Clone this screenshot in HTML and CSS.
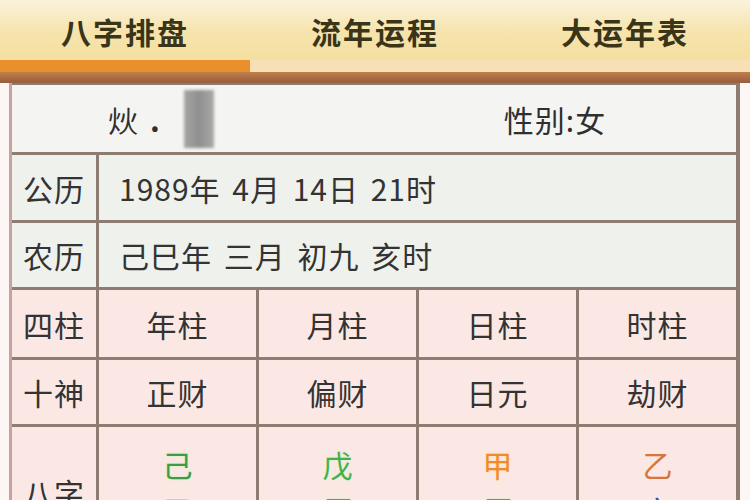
FILE: index.html
```html
<!DOCTYPE html>
<html lang="zh-CN">
<head>
<meta charset="utf-8">
<title>八字排盘</title>
<link rel="stylesheet" href="styles.css">
</head>
<body>
<div class="page">
  <nav class="tabs">
    <div class="tab active">八字排盘</div>
    <div class="tab">流年运程</div>
    <div class="tab">大运年表</div>
  </nav>
  <div class="tabline"></div>
  <div class="chart">
    <div class="row-info">
      <div class="info-name">炏<span class="dot">.</span><span class="mask"></span></div>
      <div class="info-gender">性别:女</div>
    </div>

    <div class="label light">公历</div>
    <div class="value light">1989年 4月 14日 21时</div>

    <div class="label light">农历</div>
    <div class="value light">己巳年 三月 初九 亥时</div>

    <div class="label pink">四柱</div>
    <div class="cell pink">年柱</div>
    <div class="cell pink">月柱</div>
    <div class="cell pink">日柱</div>
    <div class="cell pink">时柱</div>

    <div class="label pink">十神</div>
    <div class="cell pink">正财</div>
    <div class="cell pink">偏财</div>
    <div class="cell pink">日元</div>
    <div class="cell pink">劫财</div>

    <div class="label pink">八字</div>
    <div class="pillar pink"><span class="c-earth">己</span><span class="c-fire">巳</span></div>
    <div class="pillar pink"><span class="c-earth2">戊</span><span class="c-earth2">辰</span></div>
    <div class="pillar pink"><span class="c-wood">甲</span><span class="c-earth2">辰</span></div>
    <div class="pillar pink"><span class="c-wood2">乙</span><span class="c-water">亥</span></div>
  </div>
</div>
</body>
</html>
```
FILE: styles.css
```css
* { box-sizing: border-box; }
html, body {
  margin: 0;
  padding: 0;
  background: #fcf6f4;
  font-family: "Noto Sans CJK SC", "Noto Sans", sans-serif;
  color: #333;
  overflow: hidden;
}
.page {
  width: 750px;
  height: 500px;
  overflow: hidden;
}
.tabs {
  display: flex;
  height: 72px;
  background: linear-gradient(#faf2dc 0%, #f6e4ac 45%, #f4dd9c 100%);
}
.tab {
  flex: 1;
  display: flex;
  align-items: center;
  justify-content: center;
  font-size: 30px;
  font-weight: 700;
  letter-spacing: 2px;
  color: #3a3418;
  border-bottom: 12px solid #f7dfb6;
  padding-top: 2px;
}
.tab.active {
  border-bottom-color: #e98f2b;
}
.tabline {
  height: 11px;
  background: linear-gradient(#c17f4c, #a36640 70%, #94603f);
}
.chart {
  margin-left: 9px;
  width: 731px;
  display: grid;
  grid-template-columns: 84px repeat(4, 157px);
  grid-template-rows: 67px 65px 64px 67px 64px 130px;
  gap: 3px;
  padding: 2px 3px 3px 0;
  background: #8c7c72;
  border-left: 3px solid #c9a2a0;
}
.row-info {
  grid-column: 1 / -1;
  display: flex;
  background: #f4f4f2;
  font-size: 30px;
  color: #2f2f2f;
}
.info-name {
  width: 362px;
  display: flex;
  align-items: center;
  padding-left: 96px;
}
.dot {
  margin-left: 12px;
  font-weight: 700;
}
.mask {
  display: block;
  width: 30px;
  height: 58px;
  margin-left: 24px;
  background: linear-gradient(90deg, #a5a5a5, #8f8f8f 50%, #a8a8a8);
  filter: blur(1.5px);
}
.info-gender {
  flex: 1;
  display: flex;
  align-items: center;
  justify-content: center;
  letter-spacing: 1px;
}
.label {
  display: flex;
  align-items: center;
  justify-content: center;
  font-size: 30px;
  letter-spacing: 1px;
  color: #333;
}
.value {
  grid-column: 2 / -1;
  display: flex;
  align-items: center;
  padding-left: 20px;
  font-size: 30px;
  letter-spacing: 1px;
  word-spacing: 4px;
  color: #333;
}
.cell {
  display: flex;
  align-items: center;
  justify-content: center;
  font-size: 30px;
  letter-spacing: 1px;
  color: #333;
}
.light { background: #eff1ec; }
.pink { background: #fbe8e5; }
.pillar {
  display: flex;
  flex-direction: column;
  align-items: center;
  padding-top: 14px;
  font-size: 30px;
  line-height: 46px;
}
.c-earth { color: #3f9c42; text-shadow: 0 0 3px #c9f0c4; }
.c-earth2 { color: #46b046; text-shadow: 0 0 3px #d2f4cc; }
.c-fire { color: #e03a3a; }
.c-wood { color: #f08a2a; text-shadow: 0 0 3px #ffe0b0; }
.c-wood2 { color: #d8743c; }
.c-water { color: #2f4fbf; }
```
